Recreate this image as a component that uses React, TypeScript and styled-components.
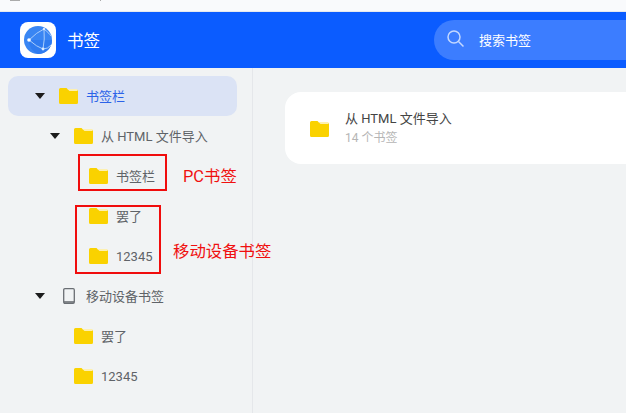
import styled, { createGlobalStyle } from 'styled-components'

const Global = createGlobalStyle`
  html, body { margin: 0; padding: 0; }
  body {
    width: 626px;
    height: 413px;
    overflow: hidden;
    font-family: Roboto, "Noto Sans CJK SC", sans-serif;
    background: #f1f3f4;
  }
`

const Page = styled.div`
  position: relative;
  width: 626px;
  height: 413px;
  overflow: hidden;
  display: flex;
  flex-direction: column;
`
const TopStrip = styled.div`
  height: 12px;
  flex: none;
  background: #f9fafc;
  border-bottom: 1px solid #e6e9ee;
  box-sizing: border-box;
  display: flex;
  padding-left: 10px;
`
const TabStub = styled.span`
  width: 10px;
  height: 1px;
  background: #aaa;
`
const TabTick = styled.span`
  width: 1px;
  height: 1px;
  margin-left: 80px;
  background: #aaa;
`
const Header = styled.header`
  height: 56px;
  flex: none;
  background: #0b5cff;
  display: flex;
  align-items: center;
  padding-left: 20px;
`
const Logo = styled.div`
  width: 36px;
  height: 36px;
  background: #fff;
  border-radius: 8px;
  display: flex;
  align-items: center;
  justify-content: center;
`
const Title = styled.div`
  width: 367px;
  margin-left: 11px;
  color: #fff;
  font-size: 16.5px;
`
const Search = styled.div`
  flex: 1;
  height: 40px;
  border-radius: 20px 0 0 20px;
  background: #3c7dff;
  display: flex;
  align-items: center;
  padding-left: 13px;
  gap: 14px;
  color: #fff;
  font-size: 13px;
  padding-bottom: 2px;
  box-sizing: border-box;
`
const Body = styled.div`
  flex: 1;
  display: flex;
`
const Sidebar = styled.nav`
  width: 253px;
  flex: none;
  box-sizing: border-box;
  border-right: 1px solid #e5e7ea;
  padding: 8px 15px 0 8px;
`
const Row = styled.div<{ $depth: number; $active?: boolean }>`
  height: 40px;
  display: flex;
  align-items: center;
  border-radius: 10px;
  padding-left: ${p => 27 + p.$depth * 15}px;
  background: ${p => (p.$active ? '#dbe3f5' : 'transparent')};
  color: ${p => (p.$active ? '#2b62e8' : '#5f6368')};
  font-size: 13px;
`
const Arrow = styled.span<{ $show: boolean }>`
  width: 10px;
  height: 6px;
  flex: none;
  margin-right: 14px;
  visibility: ${p => (p.$show ? 'visible' : 'hidden')};
  background: #1c1c1c;
  clip-path: polygon(0 0, 100% 0, 50% 100%);
`
const RowIcon = styled.span`
  display: flex;
  flex: none;
  justify-content: center;
  width: 19px;
  margin-right: 8px;
`
const Label = styled.span<{ $cjk: boolean }>`
  padding-bottom: ${p => (p.$cjk ? 2 : 0)}px;
`
const Main = styled.main`
  flex: 1;
  padding: 24px 0 0 32px;
`
const Card = styled.div`
  height: 72px;
  background: #fff;
  border-radius: 16px 0 0 16px;
  display: flex;
  align-items: center;
  padding-left: 25px;
  gap: 16px;
`
const CardIcon = styled.span`
  display: flex;
  margin-top: 1px;
`
const CardName = styled.div`
  font-size: 13px;
  color: #444;
  line-height: 16px;
  margin-top: 1px;
`
const CardCount = styled.div`
  font-size: 12px;
  color: #b5b5b5;
  line-height: 16px;
  margin-top: 3px;
`
const Note = styled.div<{ $x: number; $y: number; $w: number; $h: number }>`
  position: absolute;
  left: ${p => p.$x}px;
  top: ${p => p.$y}px;
  width: ${p => p.$w}px;
  height: ${p => p.$h}px;
  box-sizing: border-box;
  border: 2px solid #f00c0c;
`
const NoteText = styled.div<{ $x: number; $y: number }>`
  position: absolute;
  left: ${p => p.$x}px;
  top: ${p => p.$y}px;
  color: #f01010;
  font-size: 16.4px;
  line-height: 20px;
  white-space: nowrap;
`

const Folder = () => (
  <svg width="19" height="16" viewBox="0 0 19 16">
    <path d="M1.5 0H7.5l1.5 1.5h8.5A1.5 1.5 0 0 1 19 3v11.5a1.5 1.5 0 0 1-1.5 1.5h-16A1.5 1.5 0 0 1 0 14.5v-13A1.5 1.5 0 0 1 1.5 0z" fill="#fad200" />
    <path d="M8.5 1h9.2a1 1 0 0 1 .8 1v1H10.5z" fill="#fdf0b0" />
  </svg>
)

const Tablet = () => (
  <svg width="12" height="16" viewBox="0 0 12 16">
    <rect x="0.7" y="0.7" width="10.6" height="14.6" rx="1.2" fill="none" stroke="#6a6e73" strokeWidth="1.3" />
    <path d="M1 14h10" stroke="#6a6e73" strokeWidth="1.6" />
  </svg>
)

const SearchIcon = () => (
  <svg width="18" height="18" viewBox="0 0 18 18" fill="none" stroke="#c4d8ff" strokeWidth="1.5">
    <circle cx="7" cy="7" r="6" />
    <path d="M11.5 11.5l5 5" />
  </svg>
)

const Globe = () => (
  <svg width="28" height="28" viewBox="0 0 28 28">
    <circle cx="14" cy="14" r="14" fill="#3a86f3" />
    <path d="M14 14L28 14A14 14 0 0 1 14 28A14 14 0 0 1 5 14z" fill="#2f7bf0" />
    <path d="M5 14Q13 6 20 3M5 14Q13 21 19 23M20 3Q26 8 27 10M20 3Q21 13 19 23M19 23Q24 23 27 19" fill="none" stroke="#a9cdfb" strokeWidth="1" />
    <circle cx="5" cy="14" r="1.8" fill="#fff" />
    <circle cx="19" cy="23" r="1.4" fill="#dcebff" />
    <circle cx="20" cy="3" r="1.2" fill="#dcebff" />
  </svg>
)

const rows = [
  { depth: 0, label: '书签栏', arrow: true, active: true },
  { depth: 1, label: '从 HTML 文件导入', arrow: true },
  { depth: 2, label: '书签栏' },
  { depth: 2, label: '罢了' },
  { depth: 2, label: '12345' },
  { depth: 0, label: '移动设备书签', arrow: true, tablet: true },
  { depth: 1, label: '罢了' },
  { depth: 1, label: '12345' },
]

export default function App() {
  return (
    <Page>
      <Global />
      <TopStrip><TabStub /><TabTick /></TopStrip>
      <Header>
        <Logo><Globe /></Logo>
        <Title>书签</Title>
        <Search><SearchIcon />搜索书签</Search>
      </Header>
      <Body>
        <Sidebar>
          {rows.map((r, i) => (
            <Row key={i} $depth={r.depth} $active={r.active}>
              <Arrow $show={!!r.arrow} />
              <RowIcon>{r.tablet ? <Tablet /> : <Folder />}</RowIcon>
              <Label $cjk={r.label !== '12345'}>{r.label}</Label>
            </Row>
          ))}
        </Sidebar>
        <Main>
          <Card>
            <CardIcon><Folder /></CardIcon>
            <div>
              <CardName>从 HTML 文件导入</CardName>
              <CardCount>14 个书签</CardCount>
            </div>
          </Card>
        </Main>
      </Body>
      <Note $x={78} $y={154} $w={89} $h={37} />
      <Note $x={75} $y={205} $w={86} $h={69} />
      <NoteText $x={183} $y={167}>PC书签</NoteText>
      <NoteText $x={173} $y={242}>移动设备书签</NoteText>
    </Page>
  )
}
